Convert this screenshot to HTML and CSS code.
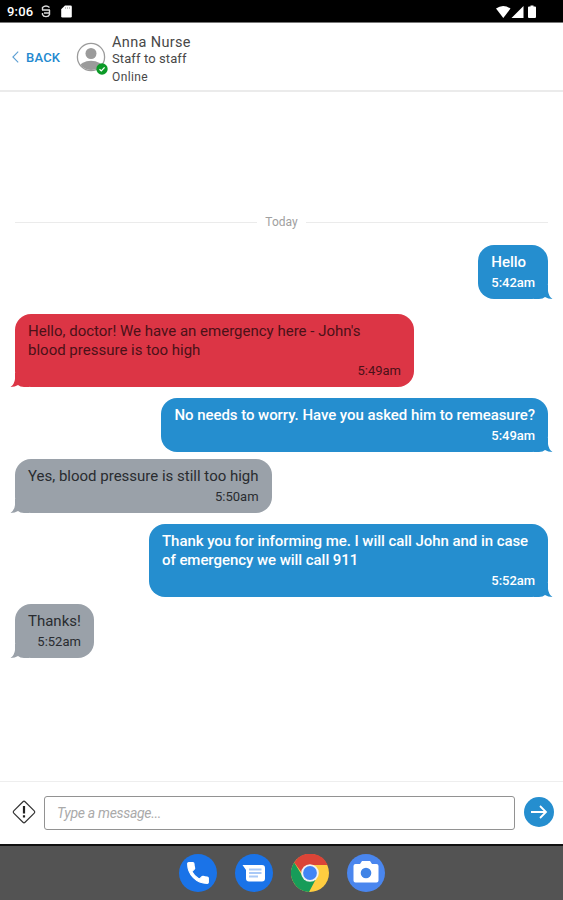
FILE: index.html
```html
<!DOCTYPE html>
<html lang="en">
<head>
  <meta charset="UTF-8">
  <meta name="viewport" content="width=device-width, initial-scale=1.0">
  <title>Chat</title>
  <link rel="stylesheet" href="styles.css">
</head>
<body>
  <!-- Status bar -->
  <div class="status-bar">
    <span class="clock">9:06</span>
    <svg class="status-debug" width="10" height="13" viewBox="0 0 10 13" fill="none" stroke="#ddd" stroke-width="1.4">
      <path d="M1.500 5V2.500Q5-.500 8.500 2.500M1 5h8M3 8h6M1.500 8v1.500c1 2.800 6 2.800 7 0V5"/>
    </svg>
    <svg class="status-card" width="11" height="13" viewBox="0 0 11 13">
      <path d="M4 .5h5.500q1.300 0 1.300 1.300v9.400q0 1.300-1.300 1.300h-8Q.2 12.500.2 11.200V4.200z" fill="#fff"/>
      <path d="M4.500 2v2M6.500 2v2M8.500 2v2" stroke="#aaa" stroke-width=".7"/>
    </svg>
    <svg class="status-signal" width="43" height="14" viewBox="0 0 43 14" fill="#fff">
      <path d="M0 3.500Q7-1.500 14.500 3.500L7.300 13z"/>
      <path d="M27.500 1v12H15.500z"/>
      <path d="M34.500 1.500V.5h3v1h1.500q1 0 1 1V12q0 1-1 1h-6q-1 0-1-1V2.500q0-1 1-1z"/>
    </svg>
  </div>

  <!-- Chat header -->
  <header class="header">
    <button class="back">
      <svg width="7" height="12" viewBox="0 0 7 12" fill="none" stroke="#5d9fd3" stroke-width="1.100"><path d="M6.200.7L.9 6l5.300 5.300"/></svg>
      BACK
    </button>
    <div class="avatar">
      <svg width="30" height="30" viewBox="0 0 30 30">
        <defs><clipPath id="face"><circle cx="15" cy="15" r="13"/></clipPath></defs>
        <circle cx="15" cy="15" r="13.600" fill="#fff" stroke="#9b9b9b" stroke-width="1.300"/>
        <g clip-path="url(#face)" fill="#9b9b9b">
          <circle cx="15" cy="11.500" r="5.500"/>
          <ellipse cx="15" cy="25.500" rx="11.500" ry="6.800"/>
        </g>
      </svg>
      <svg class="online" width="12" height="12" viewBox="0 0 12 12">
        <circle cx="6" cy="6" r="5.700" fill="#0b9a27"/>
        <path d="M3.500 6.200l1.800 1.700 3.300-3.500" fill="none" stroke="#fff" stroke-width="1.300"/>
      </svg>
    </div>
    <div class="contact">
      <div class="name">Anna Nurse</div>
      <div class="role">Staff to staff</div>
      <div class="presence">Online</div>
    </div>
  </header>

  <!-- Messages -->
  <main class="messages">
    <div class="day">Today</div>

    <div class="message sent">
      <p>Hello</p>
      <time>5:42am</time>
      <svg class="tail" viewBox="0 0 14 14"><path d="M-5 0H9V6Q9.500 11 13.500 14Q9 14 6 12Q4 14 0 14H-5z"/></svg>
    </div>
    <div class="message received urgent">
      <p>Hello, doctor! We have an emergency here - John's<br>blood pressure is too high</p>
      <time>5:49am</time>
      <svg class="tail" viewBox="0 0 14 14"><path d="M-5 0H9V6Q9.500 11 13.500 14Q9 14 6 12Q4 14 0 14H-5z"/></svg>
    </div>
    <div class="message sent">
      <p>No needs to worry. Have you asked him to remeasure?</p>
      <time>5:49am</time>
      <svg class="tail" viewBox="0 0 14 14"><path d="M-5 0H9V6Q9.500 11 13.500 14Q9 14 6 12Q4 14 0 14H-5z"/></svg>
    </div>
    <div class="message received reply">
      <p>Yes, blood pressure is still too high</p>
      <time>5:50am</time>
      <svg class="tail" viewBox="0 0 14 14"><path d="M-5 0H9V6Q9.500 11 13.500 14Q9 14 6 12Q4 14 0 14H-5z"/></svg>
    </div>
    <div class="message sent wide">
      <p>Thank you for informing me. I will call John and in case<br>of emergency we will call 911</p>
      <time>5:52am</time>
      <svg class="tail" viewBox="0 0 14 14"><path d="M-5 0H9V6Q9.500 11 13.500 14Q9 14 6 12Q4 14 0 14H-5z"/></svg>
    </div>
    <div class="message received reply">
      <p>Thanks!</p>
      <time>5:52am</time>
      <svg class="tail" viewBox="0 0 14 14"><path d="M-5 0H9V6Q9.500 11 13.500 14Q9 14 6 12Q4 14 0 14H-5z"/></svg>
    </div>
  </main>

  <!-- Message input -->
  <footer class="composer">
    <svg width="26" height="26" viewBox="0 0 26 26">
      <rect x="5" y="5" width="16" height="16" rx="1.500" transform="rotate(45 13 13)" fill="#fff" stroke="#333" stroke-width="1.200"/>
      <path d="M13 7v7.500M13 16.300v2.200" stroke="#222" stroke-width="2.200"/>
    </svg>
    <input class="field" type="text" placeholder="Type a message...">
    <button class="send">
      <svg width="18" height="16" viewBox="0 0 18 16" fill="none" stroke="#fff" stroke-width="1.800"><path d="M1 8h15M10 2l6 6-6 6"/></svg>
    </button>
  </footer>

  <!-- System dock -->
  <nav class="dock">
    <svg width="38" height="38" viewBox="0 0 38 38">
      <circle cx="19" cy="19" r="19" fill="#1a73e8"/>
      <path transform="translate(5.200 5.200) scale(1.150)" fill="#fff" stroke="#fff" stroke-linejoin="round" d="M6.620 10.790c1.440 2.830 3.760 5.140 6.590 6.590l2.200-2.200c.27-.27.67-.36 1.020-.24 1.120.37 2.330.57 3.570.57.550 0 1 .45 1 1V20c0 .55-.45 1-1 1-9.390 0-17-7.610-17-17 0-.55.450-1 1-1h3.500c.55 0 1 .45 1 1 0 1.250.2 2.450.57 3.570.11.35.03.74-.25 1.020z"/>
    </svg>
    <svg width="38" height="38" viewBox="0 0 38 38">
      <circle cx="19" cy="19" r="19" fill="#1a73e8"/>
      <path d="M7.500 11H27q3 0 3 3v10.500q0 3-3 3H14q-3 0-3-3V16z" fill="#fff"/>
      <path d="M14 15.500h12.500M14 19h12.500M14 22.500h9" stroke="#a9c9f7" stroke-width="2"/>
    </svg>
    <svg width="38" height="38" viewBox="0 0 38 38">
      <circle cx="19" cy="19" r="19" fill="#ffcd40"/>
      <path d="M26 23l-8 15A19 19 0 0 1 3.200 8.500L12 23z" fill="#179c59"/>
      <path d="M3.200 8.500A19 19 0 0 1 36.600 11H19a8 8 0 0 0-8 8z" fill="#db4437"/>
      <circle cx="19" cy="19" r="8.800" fill="#f1f1f1"/>
      <circle cx="19" cy="19" r="6.900" fill="#4285f4"/>
    </svg>
    <svg width="38" height="38" viewBox="0 0 38 38">
      <circle cx="19" cy="19" r="19" fill="#4a86ee"/>
      <path d="M8.500 10H13l2-3h8l2 3h4.500q2 0 2 2v14.500q0 2-2 2h-21q-2 0-2-2V12q0-2 2-2z" fill="#fff"/>
      <circle cx="19" cy="19" r="5.300" fill="#3f83e6"/>
    </svg>
  </nav>
</body>
</html>
```
FILE: styles.css
```css
* { box-sizing: border-box; margin: 0; padding: 0; }

body {
  display: flex;
  flex-direction: column;
  height: 100vh;
  overflow: hidden;
  background: #fff;
  color: #484848;
  font-family: Roboto, sans-serif;
}

button { border: 0; background: none; font-family: inherit; }
svg { display: block; flex-shrink: 0; }

/* Status bar */
.status-bar {
  display: flex;
  align-items: center;
  flex: 0 0 23px;
  padding: 1px 24px 0 7px;
  background: #000;
  border-bottom: 1px solid #777;
  color: #fff;
}

.clock { width: 34px; font-size: 13px; font-weight: 500; letter-spacing: 0.2px; }
.status-card { margin-left: 10px; }
.status-signal { margin-left: auto; }

/* Header */
.header {
  display: flex;
  align-items: center;
  flex: 0 0 69px;
  padding-left: 12px;
  border-bottom: 2px solid #ebebeb;
}

.back {
  display: flex;
  align-items: center;
  gap: 7px;
  width: 64px;
  padding-top: 1px;
  color: #2389cf;
  font-size: 13px;
  font-weight: 500;
  letter-spacing: 0.2px;
}

.avatar { position: relative; }
.online { position: absolute; right: -2px; bottom: -3px; }

.contact { margin-left: 6px; padding-top: 6px; }
.name { font-size: 14.5px; line-height: 16px; letter-spacing: 0.35px; }
.role { font-size: 13px; line-height: 15px; letter-spacing: 0.1px; }
.presence { font-size: 12px; line-height: 16px; margin-top: 3px; letter-spacing: 0.4px; }

/* Messages */
.messages {
  display: flex;
  flex-direction: column;
  align-items: flex-start;
  flex: 1;
  padding: 122px 15px 0;
}

.day {
  display: flex;
  align-items: center;
  gap: 8px;
  width: 100%;
  height: 16px;
  margin-bottom: 15px;
  color: #a0a0a0;
  font-size: 12px;
}

.day::before, .day::after { content: ""; flex: 1; height: 1px; background: #ebebeb; }

.message {
  position: relative;
  display: flex;
  flex-direction: column;
  padding: 8px 13px 7.5px;
  border-radius: 16px;
  font-size: 15px;
  line-height: 19px;
  white-space: nowrap;
}

.message time {
  align-self: flex-end;
  margin-top: 3px;
  font-size: 13px;
  line-height: 16px;
}

.sent {
  align-self: flex-end;
  background: #258ecf;
  color: #fff;
  fill: #258ecf;
  font-weight: 500;
  letter-spacing: -0.05px;
}

.received + .sent { margin-top: 11.5px; }
.sent + .urgent { margin-top: 15.5px; }
.sent + .reply { margin-top: 7.5px; }
.wide, .urgent { width: 399px; }
.urgent { background: #dc3545; color: #4b1118; fill: #dc3545; }
.reply { background: #9aa1a9; color: #292c30; fill: #9aa1a9; }

.tail { position: absolute; right: -5px; bottom: 0; z-index: -1; width: 14px; height: 14px; overflow: visible; }
.received .tail { right: auto; left: -5px; transform: scaleX(-1); }

/* Composer */
.composer {
  display: flex;
  align-items: center;
  flex: 0 0 63px;
  padding: 0 9px 2px 11px;
  border-top: 1px solid #eee;
}

.field {
  flex: 1;
  min-width: 0;
  height: 34px;
  margin: 2px 9px 0 7px;
  padding: 0 12px;
  border: 1px solid #929292;
  border-radius: 3px;
  background: #fff;
  font: italic 14px Roboto, sans-serif;
  letter-spacing: -0.3px;
}

.field::placeholder { color: #aaa; }

.send {
  display: flex;
  align-items: center;
  justify-content: center;
  width: 30px;
  height: 30px;
  border-radius: 50%;
  background: #258ecf;
}

/* Dock */
.dock {
  display: flex;
  justify-content: center;
  align-items: center;
  gap: 18px;
  flex: 0 0 56px;
  padding-bottom: 1px;
  border-top: 2px solid #111;
  background: #535353;
}
```
